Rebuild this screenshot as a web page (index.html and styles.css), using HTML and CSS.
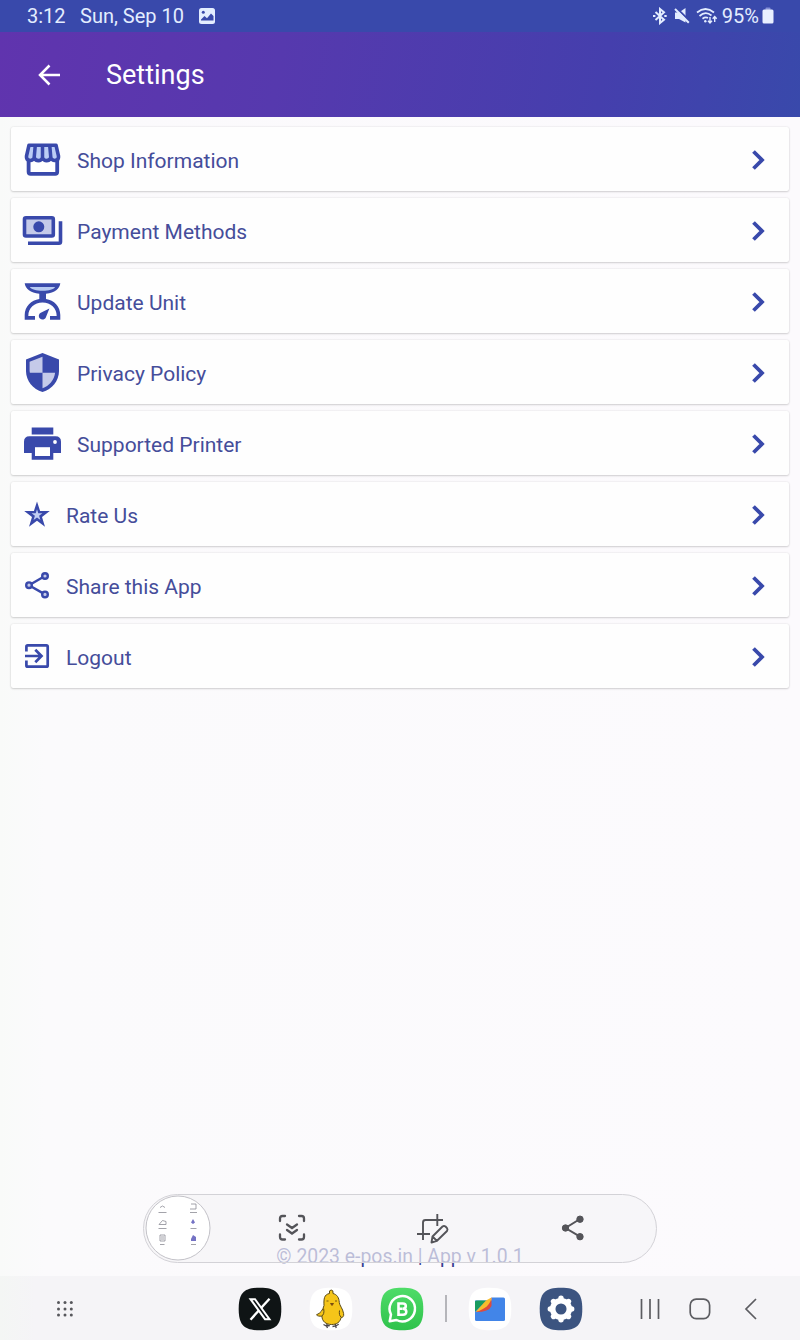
FILE: index.html
```html
<!DOCTYPE html>
<html lang="en">
<head>
<meta charset="utf-8">
<title>Settings</title>
<link rel="stylesheet" href="styles.css">
</head>
<body>
<div class="screen">
  <div class="status">
    <span class="clock">3:12</span>
    <span class="date">Sun, Sep 10</span>
    <svg class="pic" width="18" height="18" viewBox="0 0 18 18"><rect x="1" y="1" width="16" height="16" rx="2.5" fill="#e3edff"/><circle cx="5.300" cy="5.300" r="1.500" fill="#3949ab"/><path d="M3 12.500 6.500 9 9 11.200 13 6.500 15.500 9v4.500H3z" fill="#3949ab"/></svg>
    <div class="indicators">
      <svg width="16" height="18" viewBox="0 0 16 18" fill="none" stroke="#e3edff" stroke-width="2"><path d="M3.500 5 12 12.700 8 16V2L12 5.300 3.500 13"/><path d="M1 9h2.400M12.300 9h2.400" stroke-width="2.200"/></svg>
      <svg width="16" height="18" viewBox="0 0 16 18"><path d="M1 5.500h4L11.500 1v14.500L5 12H1z" fill="#e3edff"/><path d="M2.500 1 16.500 15" stroke="#3949ab" stroke-width="2"/><path d="M1 2 14.800 15.800" stroke="#e3edff" stroke-width="2"/></svg>
      <svg width="22" height="18" viewBox="0 0 22 18" fill="none" stroke="#e3edff" stroke-width="1.700"><path d="M1 5.500Q9.500-1.500 18 5.500M3.500 9Q9.500 3.700 15.500 8.500M6.500 11.700Q9.500 9.500 12 11"/><circle cx="9.300" cy="14.200" r="1.200" fill="#e3edff" stroke="none"/><path d="M14 10v6M12 13.700l2 2.200 2-2.200M18.700 15V9.500M16.700 11.800l2-2.200 2 2.200" stroke-width="1.400"/></svg>
      <span class="percent">95%</span>
      <svg width="12" height="18" viewBox="0 0 12 18"><rect x="3.500" y="0.500" width="5" height="3" rx="1" fill="#8590d6"/><rect x="0.500" y="2.500" width="11" height="14" rx="1.500" fill="#e9f0ff"/></svg>
    </div>
  </div>
  <header class="appbar">
    <svg width="24" height="24" viewBox="0 0 24 24" fill="none" stroke="#fff" stroke-width="2.500"><path d="M23 12H3M12.500 2.500 3 12l9.500 9.500"/></svg>
    <h1>Settings</h1>
  </header>
  <main class="list">
    <div class="row">
      <svg class="big" viewBox="0 0 44 44"><path d="M7.600 22v12.800q0 2 2 2h24.600q2 0 2-2V22" fill="#fff" stroke="#3949ab" stroke-width="3.800"/><path d="M8 8.200h27l2.500 11c.5 5-5.700 5.500-7.700 1.800-2 3.500-6.500 3.500-8.300 0-1.800 3.500-6.300 3.500-8.300 0-2 3.700-8.200 3.200-7.700-1.800z" fill="#bbcdf5" stroke="#3949ab" stroke-width="3.600" stroke-linejoin="round"/><path d="M14.300 8 13.200 20.500M21.500 8v12.500M28.700 8l1.100 12.500" stroke="#3949ab" stroke-width="3.500"/></svg>
      <span>Shop Information</span><svg class="chev" viewBox="0 0 14 22"><path d="M2.500 2.500 11 11l-8.500 8.500"/></svg>
    </div>
    <div class="row">
      <svg class="big" viewBox="0 0 44 44" fill="none" stroke="#3949ab" stroke-width="3.600"><rect x="3.500" y="9.800" width="28.800" height="18.200" rx="1.500" fill="#c5cae9"/><circle cx="17.800" cy="18.800" r="5.500" fill="#3949ab" stroke="none"/><path d="M39.500 13.300v20.400q0 1.500-1.500 1.500H7"/></svg>
      <span>Payment Methods</span><svg class="chev" viewBox="0 0 14 22"><path d="M2.500 2.500 11 11l-8.500 8.500"/></svg>
    </div>
    <div class="row">
      <svg class="big" viewBox="0 0 44 44" fill="#3949ab"><path d="M3.700 4.300h35.600c-.6 5.500-5.500 9.600-14.300 10.500v5.300c8 1 14.300 7.500 14.300 16v4.600H29v-3.800h6.700c0-8-6-13.400-14.200-13.400S7.300 28.900 7.300 36.900H14v3.800H3.700v-4.600c0-8.500 6.600-15 14.600-16v-5.300C9.500 13.900 4.300 9.800 3.700 4.300z"/><path d="M8.800 8h25.400c-2 2.600-6 3.800-12.700 3.800S10.800 10.600 8.800 8z" fill="#b7caf2"/><path d="M28.400 29.600 24.800 38.500c-1.800 3.600-7 2.200-7-1.500 0-1.500.8-2.500 2-3.200z"/></svg>
      <span>Update Unit</span><svg class="chev" viewBox="0 0 14 22"><path d="M2.500 2.500 11 11l-8.500 8.500"/></svg>
    </div>
    <div class="row">
      <svg class="big" viewBox="0 0 44 44"><path d="M21.500 3 38 9.500V21c0 9.500-7 18.500-16.500 21C12 39.500 5 30.500 5 21V9.500z" fill="#3949ab"/><path d="M21.500 6.700v16H8.900L8.600 21v-9.200zM21.500 22.700h12.600c-.9 7.300-6 13.300-12.600 15.500z" fill="#c5cae9"/></svg>
      <span>Privacy Policy</span><svg class="chev" viewBox="0 0 14 22"><path d="M2.500 2.500 11 11l-8.500 8.500"/></svg>
    </div>
    <div class="row">
      <svg class="big" viewBox="0 0 44 44" fill="#3949ab"><path d="M10.700 6.400h21.600v7H10.700zM8.500 15.200h26q5.500 0 5.500 5.500V32h-7.700v6.700H10.700V32H3V20.700q0-5.500 5.500-5.500z"/><path d="M14 26.200h15v8.800H14z" fill="#fff"/><circle cx="34" cy="21" r="1.900" fill="#fff"/></svg>
      <span>Supported Printer</span><svg class="chev" viewBox="0 0 14 22"><path d="M2.500 2.500 11 11l-8.500 8.500"/></svg>
    </div>
    <div class="row">
      <svg class="small" viewBox="0 0 32 32"><path d="M16 3.500 19.100 13h9.700L21 18.900 24 28.700l-8-5.900-8 5.900 3-9.800L3.200 13h9.700z" fill="#3949ab"/><path d="M16 11.300l1.300 4h4.100L18.100 17.800l1.300 4.200-3.400-2.500-3.400 2.500 1.300-4.200-3.300-2.500h4.100z" fill="#c1cdf4"/></svg>
      <span>Rate Us</span><svg class="chev" viewBox="0 0 14 22"><path d="M2.500 2.500 11 11l-8.500 8.500"/></svg>
    </div>
    <div class="row">
      <svg class="small" viewBox="0 0 32 32" stroke="#3949ab" stroke-width="2.400" fill="#c5cae9"><path d="M24 7 8 16.200l16 9.200" fill="none"/><circle cx="8" cy="16.200" r="2.800"/><circle cx="24" cy="7" r="2.800"/><circle cx="24" cy="25.400" r="2.800"/></svg>
      <span>Share this App</span><svg class="chev" viewBox="0 0 14 22"><path d="M2.500 2.500 11 11l-8.500 8.500"/></svg>
    </div>
    <div class="row">
      <svg class="small" viewBox="0 0 32 32" fill="none" stroke="#3949ab" stroke-width="2.700"><path d="M5.400 11.500V6.700q0-1.300 1.300-1.300h18.700q1.300 0 1.300 1.300v18.700q0 1.300-1.300 1.300H6.700q-1.300 0-1.300-1.300v-4.800M4 16h16.500M14.300 9.800l6.200 6.200-6.200 6.200"/></svg>
      <span>Logout</span><svg class="chev" viewBox="0 0 14 22"><path d="M2.500 2.500 11 11l-8.500 8.500"/></svg>
    </div>
  </main>
  <footer class="version">© 2023 e-pos.in | App v 1.0.1</footer>
  <div class="capture">
    <svg class="thumb" width="66" height="66" viewBox="0 0 66 66"><circle cx="33" cy="33" r="32" fill="#fff" stroke="#c3c2c8"/><g fill="none" stroke="#8c8c94" stroke-width=".8"><path d="M15 12.500q2.500-3 5 0M13.500 17.500h8M46 9h5v5h-6M45 17.500h7M14 29.500l3.500-4 3.500 1v3zM13.500 33.500h8M15 40h5v6h-5zM16 42h3M16 44h3M15 49.500h4.500M46 49.500h5M45.500 33.500h6"/></g><path d="M48 24l2 3.500-2 1.500-2-1.500zM46 44l2-4 3 2v4h-5z" fill="#7472c4"/></svg>
    <svg class="scroll" width="28" height="28" viewBox="0 0 28 28" fill="none" stroke="#545459" stroke-width="2.300" stroke-linecap="round"><path d="M2 7V4.500Q2 2 4.500 2H7M21 2h2.500Q26 2 26 4.500V7M26 20.500V23q0 2.500-2.500 2.500H21M7 25.500H4.500Q2 25.500 2 23v-2.500M9 10.500l5 3.500 5-3.500M9 16l5 3.500 5-3.500"/></svg>
    <svg class="crop" width="34" height="32" viewBox="0 0 34 32" fill="none" stroke="#545459" stroke-width="1.900"><path d="M1 22h13M7 28V10.500Q7 8 9.500 8H27M21.300 2v12"/><path d="M15.500 30.500l1-6L26.500 14.500q1.500-1 3 0l1.500 1.700q1 1.300 0 2.800L21 28.800zM17 25l3.700 3.600" stroke-linejoin="round"/></svg>
    <svg class="send" width="26" height="28" viewBox="0 0 26 28" fill="#545459" stroke="#545459"><path d="M20 5 5.500 14 20 22.700" fill="none" stroke-width="2"/><circle cx="5.500" cy="14" r="3.200"/><circle cx="20" cy="5.200" r="3.200"/><circle cx="20" cy="22.700" r="3.200"/></svg>
  </div>
  <nav class="taskbar">
    <svg class="apps" width="18" height="18" viewBox="0 0 18 18" fill="#57575c"><circle cx="2.500" cy="2.500" r="1.500"/><circle cx="9" cy="2.500" r="1.500"/><circle cx="15.300" cy="2.500" r="1.500"/><circle cx="2.500" cy="8.900" r="1.500"/><circle cx="9" cy="8.900" r="1.500"/><circle cx="15.300" cy="8.900" r="1.500"/><circle cx="2.500" cy="15" r="1.500"/><circle cx="9" cy="15" r="1.500"/><circle cx="15.300" cy="15" r="1.500"/></svg>
    <svg class="app x" viewBox="0 0 44 44"><path d="M22 .7C38 .7 43.300 6 43.300 22S38 43.300 22 43.300.7 38 .7 22 6 .7 22 .7z" fill="#0f1415"/><path d="M31.500 11.700 12.500 32.700" stroke="#fff" stroke-width="2.400"/><path d="M12.500 12.200h4.500l14.500 20H27z" fill="#0f1415" stroke="#fff" stroke-width="2"/></svg>
    <svg class="app bird" viewBox="0 0 44 44"><path d="M22 .7C38 .7 43.300 6 43.300 22S38 43.300 22 43.300.7 38 .7 22 6 .7 22 .7z" fill="#fff"/><g stroke="#5a4a17" stroke-width="1"><path d="M18.500 36l-1 3M26 36l.7 3M14.500 37.500l3 1.500 3.300-.5M23.500 39.500l3.200-.5 3-1.800M17.500 39l1 2M26.700 39l.5 2" fill="none" stroke="#4b474b" stroke-width="1.300"/><path d="M20.500 6.500q-.7-3.500 1.700-3.500t1.800 3.500c4 1 6 4 6.300 9 .2 3 3.500 6 4.300 11 .6 3-1 4-2.500 4-1 4.500-4 7-9.500 7-5.700 0-9.500-3-9.700-8.500-2.500.5-4.500 0-5.400-1.200 4-1.500 6.500-5 7.500-9.300C14.700 12 15 7.500 20.500 6.500z" fill="#f5c519"/><path d="M12.900 29c1.500-1 2.700-3.500 1.700-7.500M32 30c-1.500-1-2-3.500-1.500-6.500" fill="none"/></g><path d="M17.500 14h2M26 14h2M21.500 16.500h3l-1.500 2z" stroke="#5a3d10" fill="#b54b18" stroke-width=".8"/></svg>
    <svg class="app wa" viewBox="0 0 44 44"><defs><linearGradient id="green" x1="0" y1="0" x2="0" y2="1"><stop offset="0" stop-color="#4fdc68"/><stop offset="1" stop-color="#2fc24c"/></linearGradient></defs><path d="M22 .7C38 .7 43.300 6 43.300 22S38 43.300 22 43.300.7 38 .7 22 6 .7 22 .7z" fill="url(#green)"/><path d="M9.700 34.300l1.300-6.800A12.700 12.700 0 1 1 16.500 33z" fill="none" stroke="#fff" stroke-width="2.500" stroke-linejoin="round"/><path d="M18.500 16.500h4.300q3 0 3 2.600t-3 2.700q3.500 0 3.500 3t-3.500 2.900h-4.300zM18.500 21.800h4" fill="none" stroke="#fff" stroke-width="2.600"/></svg>
    <i class="divider"></i>
    <svg class="app files" viewBox="0 0 44 44"><path d="M22 .7C38 .7 43.300 6 43.300 22S38 43.300 22 43.300.7 38 .7 22 6 .7 22 .7z" fill="#fff"/><rect x="7" y="10.500" width="30" height="23.500" rx="1.500" fill="#4285e8"/><path d="M7 10h16.500v3.500H7z" fill="#fff"/><path d="M7 24.500V15q0-1.500 1.500-1.500H19z" fill="#199b60"/><path d="M23.500 10.500V19q-2.500 6-15.500 6z" fill="#dd4b3d"/><path d="M23.500 10.500Q22 21 7.500 25L18 13.500z" fill="#f8bd2c"/></svg>
    <svg class="app gear" viewBox="0 0 44 44"><path d="M22 .7C38 .7 43.300 6 43.300 22S38 43.300 22 43.300.7 38 .7 22 6 .7 22 .7z" fill="#3c5480"/><circle cx="22" cy="22" r="8.300" fill="none" stroke="#fff" stroke-width="5.500"/><g stroke="#fff" stroke-width="5.400" stroke-linecap="round"><path d="M22 11.300V12M22 32v.7M11.300 22H12M32 22h.7M14.500 14.500l.5.500M29 29l.5.500M29.500 14.500l-.5.500M15 29l-.5.500"/></g></svg>
    <svg class="recent" width="22" height="22" viewBox="0 0 22 22" stroke="#5c5c61" stroke-width="1.700"><path d="M2.500 1v20M11 1v20M19.500 1v20"/></svg>
    <svg class="home" width="22" height="22" viewBox="0 0 22 22" fill="none" stroke="#5c5c61" stroke-width="1.700"><rect x="1.200" y="1.200" width="19.400" height="19.400" rx="6"/></svg>
    <svg class="back" width="14" height="22" viewBox="0 0 14 22" fill="none" stroke="#5c5c61" stroke-width="1.700"><path d="M12 1 2 11l10 10"/></svg>
  </nav>
</div>
</body>
</html>
```
FILE: styles.css
```css
* { box-sizing: border-box; }
body { margin: 0; font-family: Roboto, "Liberation Sans", sans-serif; }
svg { display: block; flex: none; }
.screen { position: relative; width: 800px; height: 1340px; display: flex; flex-direction: column; background: linear-gradient(90deg, #f9faf9 0, #fbfafc 45px, #fcfafd 100%); overflow: hidden; }
.status { height: 32px; flex: none; display: flex; align-items: center; padding: 0 26px 0 27px; background: #3949ab; color: #e3edff; font-size: 20px; }
.clock { width: 53px; }
.date { width: 118px; white-space: nowrap; }
.indicators { margin-left: auto; display: flex; align-items: center; gap: 6px; }
.percent { margin: 0 -3px 0 -2px; }
.appbar { height: 85px; flex: none; display: flex; align-items: center; padding-left: 37px; gap: 45px; background: linear-gradient(100deg, #6034ae, #5639ae 35%, #453fad 75%, #3949ab); color: #fff; }
.appbar h1 { margin: 0; padding-top: 1px; font-size: 27px; font-weight: 400; }
.list { display: flex; flex-direction: column; gap: 7px; padding: 10px 11px; }
.row { height: 64px; display: flex; align-items: center; padding: 0 24px 0 10px; border-radius: 2px; background: #fefefe; box-shadow: 0 1px 2px rgba(0, 0, 0, .15), 0 0 2px rgba(0, 0, 0, .12); color: #454d9a; font-size: 21px; }
.row span { padding-top: 3px; }
.big { width: 44px; height: 44px; margin-right: 12px; }
.small { width: 32px; height: 32px; margin-right: 13px; }
.chev { width: 14px; height: 23px; padding-top: 1px; margin-left: auto; fill: none; stroke: #3949ab; stroke-width: 3.8; }
.version { margin-top: auto; height: 39px; line-height: 39px; text-align: center; color: #343c91; font-size: 19.400px; }
.capture { position: absolute; left: 143px; top: 1194px; width: 514px; height: 69px; display: flex; align-items: center; border: 1px solid #d3d2d7; border-radius: 35px; background: rgba(245, 244, 247, .7); padding-bottom: 2px; }
.thumb { margin-left: 1px; }
.scroll { margin-left: 67px; }
.crop { margin-left: 110px; }
.send { margin-left: 110px; }
.taskbar { height: 64px; flex: none; display: flex; align-items: center; padding-top: 1px; background: linear-gradient(90deg, #f4f6f4, #f5f4f7 35px); }
.app { width: 44px; height: 44px; }
.apps { margin-left: 55.500px; }
.x { margin-left: 164px; }
.bird, .wa { margin-left: 27px; }
.divider { width: 2px; height: 27px; margin-left: 21px; background: #b5b5ba; }
.files { margin-left: 21px; }
.gear { margin-left: 27px; }
.recent { margin-left: 56.500px; }
.home { margin-left: 28px; }
.back { margin-left: 33px; }
```
